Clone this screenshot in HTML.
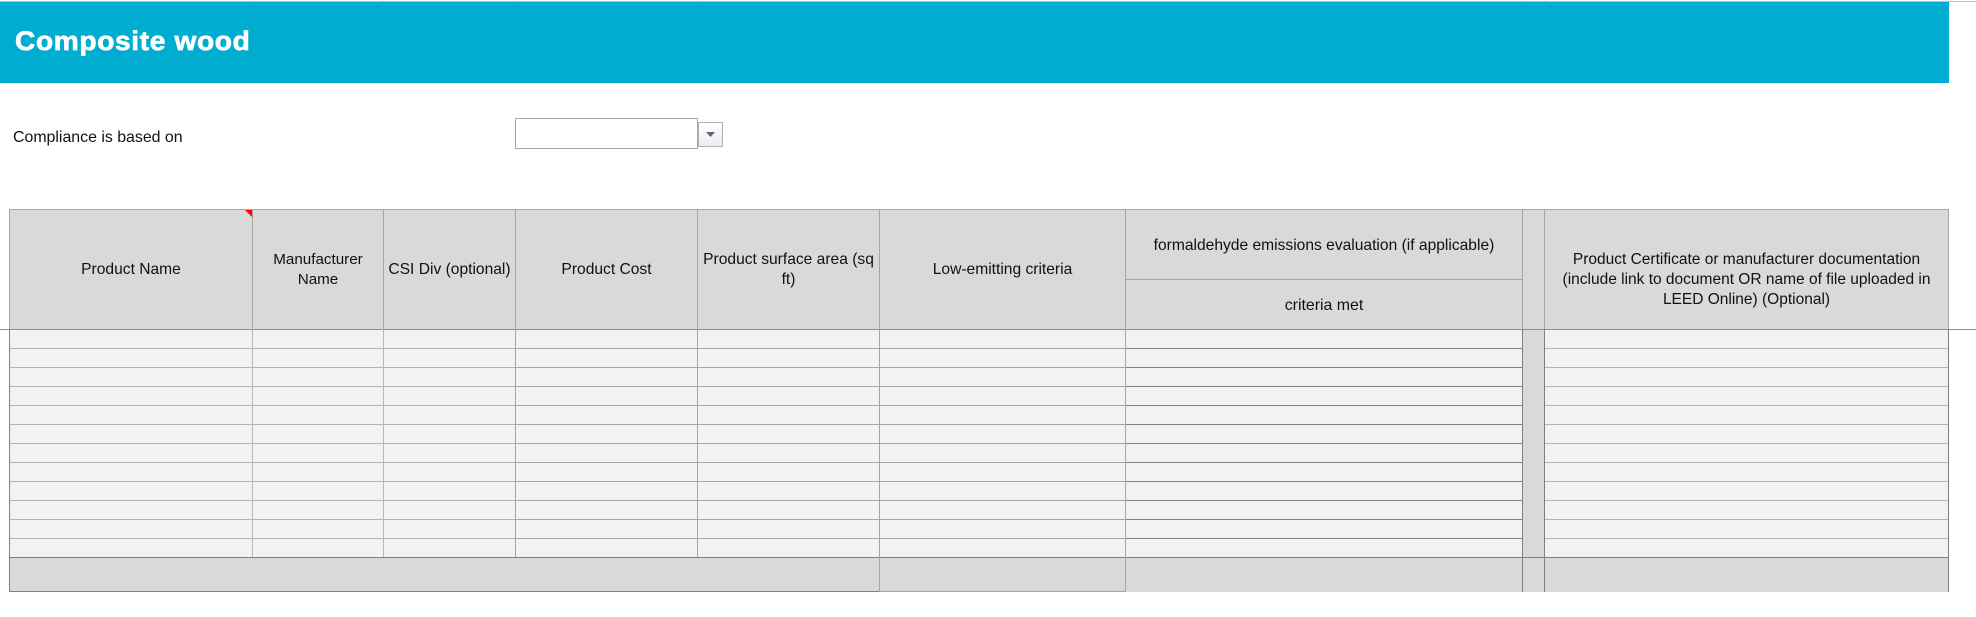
<!DOCTYPE html>
<html><head><meta charset="utf-8"><style>
html,body{margin:0;padding:0;background:#fff}
body{position:relative;width:1976px;height:617px;overflow:hidden;font-family:"Liberation Sans",Arial,sans-serif;color:#000}
div{position:absolute;box-sizing:border-box}
.t{display:flex;align-items:center;justify-content:center;text-align:center;font-size:15.6px;line-height:20px;color:#111;white-space:nowrap}
.h{height:1px}.v{width:1px}
.a{background:#b4b4b4}.b{background:#a6a6a6}.c{background:#808080}.d{background:#a6a6a6}
</style></head><body>
<div class="h" style="left:0;top:1px;width:1976px;background:#bdbdbd"></div>
<div style="left:252px;top:0;width:1px;height:1px;background:#ddd"></div>
<div style="left:383px;top:0;width:1px;height:1px;background:#ddd"></div>
<div style="left:515px;top:0;width:1px;height:1px;background:#ddd"></div>
<div style="left:697px;top:0;width:1px;height:1px;background:#ddd"></div>
<div style="left:1522px;top:0;width:1px;height:1px;background:#ddd"></div>
<div style="left:1544px;top:0;width:1px;height:1px;background:#ddd"></div>
<div style="left:0;top:2px;width:1949px;height:81px;background:#00add0"></div>
<div style="left:15px;top:25px;font-size:26.67px;line-height:32px;font-weight:bold;color:#fff;-webkit-text-stroke:.7px #fff;letter-spacing:.6px;transform:scaleX(1.055);transform-origin:0 50%;white-space:nowrap">Composite wood</div>
<div style="left:13px;top:128px;font-size:15.9px;line-height:20px;color:#111;white-space:nowrap">Compliance is based on</div>
<div style="left:515px;top:118px;width:183px;height:31px;border:1px solid #a6a6a6;background:#fff"></div>
<div style="left:698px;top:122px;width:25px;height:25px;border:1px solid #a9b0b8;background:linear-gradient(#fff,#e9edf4)"></div>
<svg style="position:absolute;left:705px;top:131px" width="11" height="7"><path d="M1 1H10L5.5 6Z" fill="#666"/></svg>

<div style="left:9px;top:209px;width:1940px;height:120px;background:#d9d9d9"></div>
<div style="left:9px;top:329px;width:1940px;height:228px;background:#f2f2f2"></div>
<div style="left:9px;top:557px;width:1940px;height:35px;background:#d9d9d9"></div>
<div style="left:1522px;top:329px;width:23px;height:263px;background:#d9d9d9"></div>

<div class="h d" style="left:9px;top:209px;width:1940px"></div>
<div class="h" style="left:0;top:329px;width:1976px;background:#909090"></div>
<div class="h d" style="left:1125px;top:279px;width:397px"></div>

<div class="h a" style="left:10px;top:348px;width:505px"></div><div class="h b" style="left:515px;top:348px;width:610px"></div><div class="h c" style="left:1125px;top:348px;width:397px"></div><div class="h a" style="left:1545px;top:348px;width:403px"></div>
<div class="h a" style="left:10px;top:367px;width:505px"></div><div class="h b" style="left:515px;top:367px;width:610px"></div><div class="h c" style="left:1125px;top:367px;width:397px"></div><div class="h a" style="left:1545px;top:367px;width:403px"></div>
<div class="h a" style="left:10px;top:386px;width:505px"></div><div class="h b" style="left:515px;top:386px;width:610px"></div><div class="h c" style="left:1125px;top:386px;width:397px"></div><div class="h a" style="left:1545px;top:386px;width:403px"></div>
<div class="h a" style="left:10px;top:405px;width:505px"></div><div class="h b" style="left:515px;top:405px;width:610px"></div><div class="h c" style="left:1125px;top:405px;width:397px"></div><div class="h a" style="left:1545px;top:405px;width:403px"></div>
<div class="h a" style="left:10px;top:424px;width:505px"></div><div class="h b" style="left:515px;top:424px;width:610px"></div><div class="h c" style="left:1125px;top:424px;width:397px"></div><div class="h a" style="left:1545px;top:424px;width:403px"></div>
<div class="h a" style="left:10px;top:443px;width:505px"></div><div class="h b" style="left:515px;top:443px;width:610px"></div><div class="h c" style="left:1125px;top:443px;width:397px"></div><div class="h a" style="left:1545px;top:443px;width:403px"></div>
<div class="h a" style="left:10px;top:462px;width:505px"></div><div class="h b" style="left:515px;top:462px;width:610px"></div><div class="h c" style="left:1125px;top:462px;width:397px"></div><div class="h a" style="left:1545px;top:462px;width:403px"></div>
<div class="h a" style="left:10px;top:481px;width:505px"></div><div class="h b" style="left:515px;top:481px;width:610px"></div><div class="h c" style="left:1125px;top:481px;width:397px"></div><div class="h a" style="left:1545px;top:481px;width:403px"></div>
<div class="h a" style="left:10px;top:500px;width:505px"></div><div class="h b" style="left:515px;top:500px;width:610px"></div><div class="h c" style="left:1125px;top:500px;width:397px"></div><div class="h a" style="left:1545px;top:500px;width:403px"></div>
<div class="h a" style="left:10px;top:519px;width:505px"></div><div class="h b" style="left:515px;top:519px;width:610px"></div><div class="h c" style="left:1125px;top:519px;width:397px"></div><div class="h a" style="left:1545px;top:519px;width:403px"></div>
<div class="h a" style="left:10px;top:538px;width:505px"></div><div class="h b" style="left:515px;top:538px;width:610px"></div><div class="h c" style="left:1125px;top:538px;width:397px"></div><div class="h a" style="left:1545px;top:538px;width:403px"></div>

<div class="h c" style="left:9px;top:557px;width:1940px"></div>
<div class="h c" style="left:9px;top:591px;width:871px"></div>
<div class="h d" style="left:880px;top:591px;width:246px"></div>

<div class="v c" style="left:9px;top:329px;height:263px"></div>
<div class="v d" style="left:9px;top:209px;height:120px"></div>
<div class="v d" style="left:252px;top:209px;height:120px"></div>
<div class="v d" style="left:383px;top:209px;height:120px"></div>
<div class="v d" style="left:515px;top:209px;height:120px"></div>
<div class="v d" style="left:697px;top:209px;height:120px"></div>
<div class="v d" style="left:879px;top:209px;height:120px"></div>
<div class="v d" style="left:1125px;top:209px;height:120px"></div>
<div class="v d" style="left:1522px;top:209px;height:120px"></div>
<div class="v d" style="left:1544px;top:209px;height:120px"></div>
<div class="v d" style="left:1948px;top:209px;height:120px"></div>

<div class="v" style="left:252px;top:329px;height:228px;background:#b8b8b8"></div>
<div class="v" style="left:383px;top:329px;height:228px;background:#b8b8b8"></div>
<div class="v b" style="left:515px;top:329px;height:228px"></div>
<div class="v b" style="left:697px;top:329px;height:228px"></div>
<div class="v b" style="left:879px;top:329px;height:263px"></div>
<div class="v b" style="left:1125px;top:329px;height:263px"></div>
<div class="v c" style="left:1522px;top:329px;height:263px"></div>
<div class="v c" style="left:1544px;top:329px;height:263px"></div>
<div class="v c" style="left:1948px;top:329px;height:263px"></div>

<svg style="position:absolute;left:245px;top:210px" width="7" height="7"><path d="M0 0H7V7Z" fill="#f00"/></svg>

<div class="t" style="left:10px;top:210px;width:242px;height:119px">Product Name</div>
<div class="t" style="left:253px;top:210px;width:130px;height:119px;font-size:15.2px">Manufacturer<br>Name</div>
<div class="t" style="left:384px;top:210px;width:131px;height:119px">CSI Div (optional)</div>
<div class="t" style="left:516px;top:210px;width:181px;height:119px">Product Cost</div>
<div class="t" style="left:698px;top:210px;width:181px;height:119px">Product surface area (sq<br>ft)</div>
<div class="t" style="left:880px;top:210px;width:245px;height:119px">Low-emitting criteria</div>
<div class="t" style="left:1126px;top:212px;width:396px;height:68px">formaldehyde emissions evaluation (if applicable)</div>
<div class="t" style="left:1126px;top:282px;width:396px;height:48px;font-size:15.9px">criteria met</div>
<div class="t" style="left:1545px;top:220px;width:403px;height:119px;font-size:15.5px">Product Certificate or manufacturer documentation<br>(include link to document OR name of file uploaded in<br>LEED Online) (Optional)</div>
</body></html>
